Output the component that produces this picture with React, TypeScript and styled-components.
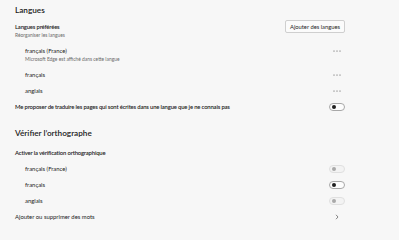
import React from "react";
import styled, { createGlobalStyle } from "styled-components";

const Global = createGlobalStyle`
  html, body { margin: 0; padding: 0; background: #f7f7f7; }
  body { font-family: Lato, "Open Sans", sans-serif; color: #1b1b1b; }
`;

const Page = styled.div`
  width: 399px;
  height: 240px;
  box-sizing: border-box;
  padding: 1.5px 54px 0 15px;
  background: #f7f7f7;
  overflow: hidden;
`;

const SectionTitle = styled.h2<{ $top?: number }>`
  margin: ${(p) => p.$top ?? 0}px 0 0 0;
  height: 16px;
  line-height: 16px;
  font-size: 8.2px;
  font-weight: 600;
  color: #1b1b1b;
`;

const PrefBlock = styled.div`
  margin-top: 2.5px;
  display: flex;
  justify-content: space-between;
  align-items: flex-start;
`;

const PrefText = styled.div`
  padding-top: 3px;
  display: flex;
  flex-direction: column;
`;

const Label = styled.div<{ $bold?: boolean }>`
  font-size: 5.9px;
  line-height: 8px;
  font-weight: ${(p) => (p.$bold ? 600 : 400)};
  letter-spacing: ${(p) => (p.$bold ? "-0.17px" : "0")};
  white-space: nowrap;
`;

const Sub = styled.div`
  font-size: 4.9px;
  line-height: 8px;
  color: #6a6a6a;
  white-space: nowrap;
`;

const Button = styled.button`
  width: 60px;
  height: 13px;
  padding: 0;
  box-sizing: border-box;
  border: 1px solid #cfcfcf;
  border-radius: 2px;
  background: #fbfbfb;
  font-family: inherit;
  font-size: 5.8px;
  color: #1b1b1b;
  line-height: 11px;
`;

const List = styled.div`
  margin-top: 3.5px;
`;

const Row = styled.div<{ $indent?: boolean }>`
  height: 16px;
  box-sizing: border-box;
  padding-left: ${(p) => (p.$indent ? 10 : 0)}px;
  display: flex;
  align-items: center;
  justify-content: space-between;
`;

const TallRow = styled.div`
  height: 24px;
  box-sizing: border-box;
  padding: 4px 0 0 10px;
  display: flex;
  justify-content: space-between;
  align-items: flex-start;
`;

const Col = styled.div`
  display: flex;
  flex-direction: column;
`;

const IconBox = styled.div`
  width: 16px;
  height: 8px;
  display: flex;
  align-items: center;
  justify-content: center;
`;

const Track = styled.div<{ $disabled?: boolean }>`
  width: 16px;
  height: 8px;
  box-sizing: border-box;
  border-radius: 4px;
  border: 1px solid ${(p) => (p.$disabled ? "#e0e0e0" : "#a8a8a8")};
  background: ${(p) => (p.$disabled ? "#f3f3f3" : "#fdfdfd")};
  display: flex;
  align-items: center;
  padding-left: 1.5px;
`;

const Knob = styled.div<{ $disabled?: boolean }>`
  width: 4px;
  height: 4px;
  border-radius: 50%;
  background: ${(p) => (p.$disabled ? "#a9a9a9" : "#202020")};
`;

const Gap = styled.div<{ $h: number }>`
  height: ${(p) => p.$h}px;
`;

const Dots = () => (
  <IconBox>
    <svg width="8" height="2" viewBox="0 0 8 2">
      <circle cx="1" cy="1" r="0.55" fill="#444" />
      <circle cx="4" cy="1" r="0.55" fill="#444" />
      <circle cx="7" cy="1" r="0.55" fill="#444" />
    </svg>
  </IconBox>
);

const Chevron = () => (
  <IconBox>
    <svg width="4" height="6" viewBox="0 0 4 6">
      <path d="M1 0.8 L3 3 L1 5.2" fill="none" stroke="#555" strokeWidth="0.7" />
    </svg>
  </IconBox>
);

const Toggle = ({ disabled }: { disabled?: boolean }) => (
  <Track $disabled={disabled}>
    <Knob $disabled={disabled} />
  </Track>
);

export default function App() {
  return (
    <Page>
      <Global />
      <SectionTitle>Langues</SectionTitle>
      <PrefBlock>
        <PrefText>
          <Label $bold>Langues préférées</Label>
          <Sub>Réorganiser les langues</Sub>
        </PrefText>
        <Button>Ajouter des langues</Button>
      </PrefBlock>
      <List>
        <TallRow>
          <Col>
            <Label>français (France)</Label>
            <Sub>Microsoft Edge est affiché dans cette langue</Sub>
          </Col>
          <Dots />
        </TallRow>
        <Row $indent>
          <Label>français</Label>
          <Dots />
        </Row>
        <Row $indent>
          <Label>anglais</Label>
          <Dots />
        </Row>
        <Row>
          <Label $bold>
            Me proposer de traduire les pages qui sont écrites dans une langue que je ne connais pas
          </Label>
          <Toggle />
        </Row>
      </List>
      <SectionTitle $top={10.6}>Vérifier l’orthographe</SectionTitle>
      <Gap $h={4} />
      <Row>
        <Label $bold>Activer la vérification orthographique</Label>
      </Row>
      <Row $indent>
        <Label>français (France)</Label>
        <Toggle disabled />
      </Row>
      <Row $indent>
        <Label>français</Label>
        <Toggle />
      </Row>
      <Row $indent>
        <Label>anglais</Label>
        <Toggle disabled />
      </Row>
      <Row>
        <Label>Ajouter ou supprimer des mots</Label>
        <Chevron />
      </Row>
    </Page>
  );
}
